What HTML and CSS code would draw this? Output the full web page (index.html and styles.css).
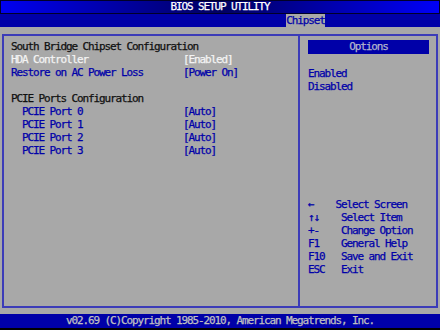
FILE: index.html
```html
<!DOCTYPE html>
<html lang="en">
<head>
    <meta charset="UTF-8">
    <meta name="viewport" content="width=device-width, initial-scale=1.0">
    <title>BIOS SETUP UTILITY</title>
    <link rel="stylesheet" href="styles.css">
</head>
<body>
    <div class="screen">
        <div class="title">BIOS SETUP UTILITY</div>
        <div class="tabs">
            <span class="tab">Chipset</span>
        </div>
        <div class="main">
            <div class="panel">
                <div class="left">
                    <div class="head">South Bridge Chipset Configuration</div>
                    <div class="row sel"><span class="label">HDA Controller</span><span>[Enabled]</span></div>
                    <div class="row"><span class="label">Restore on AC Power Loss</span><span>[Power On]</span></div>
                    <div class="blank"></div>
                    <div class="head">PCIE Ports Configuration</div>
                    <div class="row sub"><span class="label">PCIE Port 0</span><span>[Auto]</span></div>
                    <div class="row sub"><span class="label">PCIE Port 1</span><span>[Auto]</span></div>
                    <div class="row sub"><span class="label">PCIE Port 2</span><span>[Auto]</span></div>
                    <div class="row sub"><span class="label">PCIE Port 3</span><span>[Auto]</span></div>
                </div>
                <div class="right">
                    <div class="options">Options</div>
                    <div class="choices">
                        <div>Enabled</div>
                        <div>Disabled</div>
                    </div>
                    <div class="help">
                        <div>←    Select Screen</div>
                        <div>↑↓    Select Item</div>
                        <div>+-    Change Option</div>
                        <div>F1    General Help</div>
                        <div>F10   Save and Exit</div>
                        <div>ESC   Exit</div>
                    </div>
                </div>
            </div>
        </div>
        <div class="footer">v02.69 (C)Copyright 1985-2010, American Megatrends, Inc.</div>
    </div>
</body>
</html>
```

FILE: styles.css
```css
*{
    margin: 0;
    padding: 0;
    box-sizing: border-box;
}
body{
    background-color: #000;
    font-family: "DejaVu Sans Mono", "Liberation Mono", monospace;
    font-size: 11px;
    letter-spacing: -1.12px;
    line-height: 13px;
    -webkit-text-stroke: 0.25px;
}
.screen{
    width: 440px;
    height: 330px;
    overflow: hidden;
}
.title{
    height: 14px;
    line-height: 12px;
    border: 1px solid #000028;
    background: linear-gradient(to right, #0000f0, #000060 50%, #0000f8);
    color: #fff;
    text-align: center;
}
.tabs{
    height: 13px;
    background-color: #0000a8;
    display: flex;
    justify-content: flex-end;
    padding-right: 115px;
}
.tab{
    width: 39px;
    height: 13px;
    background-color: #a8a8a8;
    color: #0000a8;
    text-align: center;
}
.main{
    height: 287px;
    background-color: #a8a8a8;
    padding: 7px 2px 6px 2px;
}
.panel{
    height: 100%;
    border: 2px solid #3c3cb8;
    display: grid;
    grid-template-columns: 294px minmax(0, 1fr);
    grid-template-rows: minmax(0, 1fr);
}
.left{
    padding: 4px 0 0 7px;
}
.head{
    color: #101010;
}
.row{
    display: flex;
    color: #0000a8;
}
.row .label{
    width: 172px;
}
.row.sub .label{
    width: 161px;
    margin-left: 11px;
}
.row.sel{
    color: #f4f4f4;
}
.blank{
    height: 13px;
}
.right{
    border-left: 2px solid #3c3cb8;
    padding: 4px 7px 30px 8px;
    display: flex;
    flex-direction: column;
    color: #0000a8;
}
.options{
    height: 14px;
    line-height: 14px;
    background-color: #0000a8;
    color: #b4b4cc;
    text-align: center;
}
.choices{
    margin-top: 13px;
}
.help{
    margin-top: auto;
}
.help div{
    white-space: pre;
}
.footer{
    height: 14px;
    line-height: 14px;
    background-color: #0000a8;
    color: #c0c0c0;
    text-align: center;
}
```
